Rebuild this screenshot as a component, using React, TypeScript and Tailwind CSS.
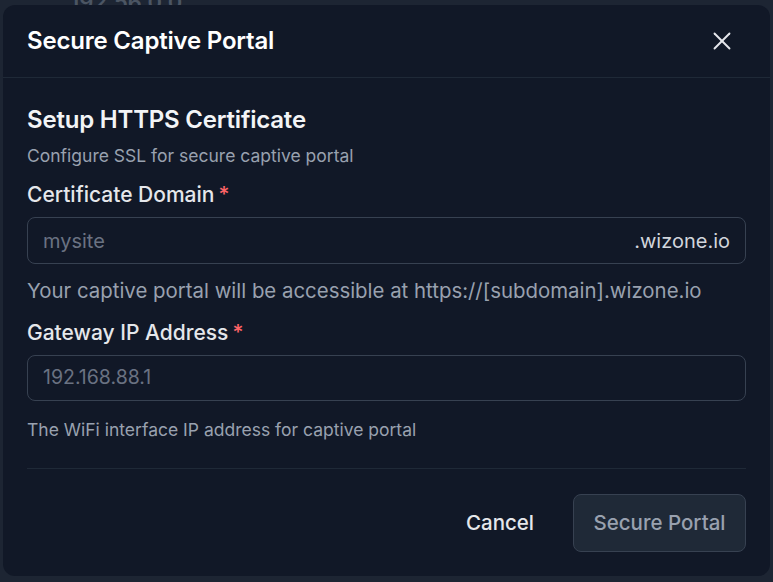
import { X } from 'lucide-react';

export default function App() {
  return (
    <div
      className="relative w-[773px] h-[582px] bg-[#1d2533] pt-[5px] pl-[3px] pr-[3px] overflow-hidden"
      style={{ fontFamily: 'Inter, "Noto Sans", sans-serif' }}
    >
      {/* page content behind the dialog */}
      <span className="absolute left-[70px] top-[-14px] text-[22px] font-semibold text-[#4b5563]">192.56.0.0</span>

      <div className="relative z-10 h-[571px] rounded-xl bg-[#111827] flex flex-col">
        {/* header */}
        <div className="h-[73px] flex items-center justify-between pl-[24px] pr-[33px] border-b border-[#1f2937]">
          <h2 className="text-[24px] font-semibold text-white tracking-[-0.2px]">Secure Captive Portal</h2>
          <button type="button" className="text-gray-200">
            <X size={30} strokeWidth={1.5} />
          </button>
        </div>

        {/* body */}
        <div className="px-[24px] pt-[26px]">
          <h3 className="text-[24px] font-semibold text-gray-100 leading-[32px] tracking-[-0.2px]">Setup HTTPS Certificate</h3>
          <p className="mt-[7px] text-[17.5px] text-gray-400 leading-[26px]">Configure SSL for secure captive portal</p>

          <label className="mt-[11px] flex text-[21px] font-medium text-gray-200 leading-[30px]">
            Certificate Domain<span className="text-red-400 ml-1">*</span>
          </label>
          <div className="mt-[7px] h-[47px] rounded-lg border border-[#374151] flex items-center px-[15px] text-[20px]">
            <span className="flex-1 text-gray-500">mysite</span>
            <span className="text-gray-300">.wizone.io</span>
          </div>
          <p className="mt-[12px] text-[20.4px] text-gray-400 leading-[30px]">
            Your captive portal will be accessible at https://[subdomain].wizone.io
          </p>

          <label className="mt-[12px] flex text-[21px] font-medium text-gray-200 leading-[30px]">
            Gateway IP Address<span className="text-red-400 ml-1">*</span>
          </label>
          <div className="mt-[7px] h-[46px] rounded-lg border border-[#374151] flex items-center px-[15px] text-[19.5px] text-gray-500">
            192.168.88.1
          </div>
          <p className="mt-[16px] text-[17.5px] text-gray-400 leading-[26px]">The WiFi interface IP address for captive portal</p>

          <div className="mt-[25px] border-t border-[#1f2937]" />

          <div className="mt-[25px] flex justify-end items-center gap-[16px]">
            <button type="button" className="px-[23px] h-[58px] text-[20.5px] font-medium text-gray-200 whitespace-nowrap">
              Cancel
            </button>
            <button
              type="button"
              className="w-[173px] h-[58px] rounded-lg border border-[#374151] bg-[#1f2937] text-[20.5px] font-medium text-gray-400 whitespace-nowrap"
            >
              Secure Portal
            </button>
          </div>
        </div>
      </div>
    </div>
  );
}
